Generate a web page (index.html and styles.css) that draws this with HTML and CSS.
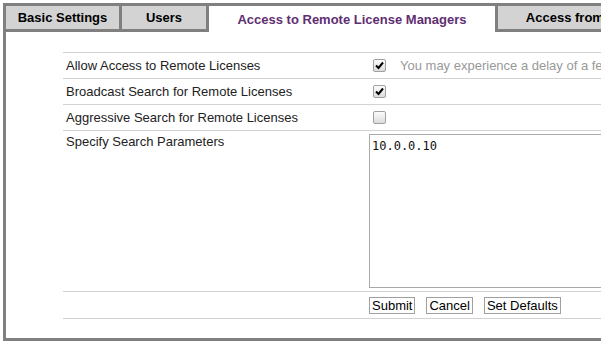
FILE: index.html
```html
<!DOCTYPE html>
<html lang="en">
<head>
    <meta charset="UTF-8">
    <meta name="viewport" content="width=device-width, initial-scale=1.0">
    <title>License Manager Configuration</title>
    <link rel="stylesheet" href="styles.css">
</head>
<body>
    <div class="panel">
        <ul class="tabs">
            <li class="tab tab-basic">Basic Settings</li>
            <li class="tab tab-users">Users</li>
            <li class="tab active">Access to Remote License Managers</li>
            <li class="tab tab-clients">Access from Remote Clients</li>
        </ul>
        <form class="settings" onsubmit="return false">
            <div class="row">
                <div class="label">Allow Access to Remote Licenses</div>
                <div class="field">
                    <input type="checkbox" class="check" checked>
                    <span class="hint">You may experience a delay of a few minutes before your changes take effect.</span>
                </div>
            </div>
            <div class="row">
                <div class="label">Broadcast Search for Remote Licenses</div>
                <div class="field"><input type="checkbox" class="check" checked></div>
            </div>
            <div class="row">
                <div class="label">Aggressive Search for Remote Licenses</div>
                <div class="field"><input type="checkbox" class="check"></div>
            </div>
            <div class="row row-params">
                <div class="label">Specify Search Parameters</div>
                <div class="field"><textarea class="params">10.0.0.10</textarea></div>
            </div>
            <div class="row row-actions">
                <div class="label"></div>
                <div class="field buttons">
                    <button type="submit">Submit</button>
                    <button type="button">Cancel</button>
                    <button type="button">Set Defaults</button>
                </div>
            </div>
        </form>
    </div>
</body>
</html>
```

FILE: styles.css
```css
body {
    margin: 3px 0 0 3px;
    overflow: hidden;
    font-family: Arial, "Liberation Sans", sans-serif;
    font-size: 13px;
    color: #222;
    background: white;
}
.panel {
    width: 900px;
    border: 3px solid #808080;
}
.tabs {
    display: flex;
    margin: 0;
    padding: 0;
    list-style: none;
}
.tab {
    flex-shrink: 0;
    height: 23px;
    line-height: 23px;
    text-align: center;
    font-weight: bold;
    color: #000;
    background-color: #d3d3d3;
    border-bottom: 3px solid #808080;
    white-space: nowrap;
}
.tab-basic {
    width: 113px;
    border-right: 3px solid #808080;
}
.tab-users {
    width: 84px;
    border-right: 3px solid #808080;
}
.tab.active {
    width: 286px;
    height: 26px;
    line-height: 27px;
    background-color: white;
    color: #5f2e72;
    border-bottom: none;
}
.tab-clients {
    width: 232px;
    border-left: 3px solid #808080;
}
.settings {
    margin: 20px 0 19px 57px;
    width: 800px;
    border-bottom: 1px solid #d3d3d3;
}
.row {
    display: flex;
    align-items: center;
    height: 25px;
    border-top: 1px solid #d3d3d3;
}
.label {
    flex-shrink: 0;
    width: 303px;
    padding-left: 3px;
    color: #222;
}
.field {
    flex: 1;
    display: flex;
    align-items: center;
    min-width: 0;
}
.check {
    flex-shrink: 0;
    appearance: none;
    width: 13px;
    height: 13px;
    margin: 0 0 0 4px;
    border: 1px solid #a0a0a0;
    border-radius: 2px;
    background: linear-gradient(#fcfcfc, #dcdcdc);
}
.check:checked {
    background: url("data:image/svg+xml;utf8,<svg xmlns='http://www.w3.org/2000/svg' width='11' height='11'><path d='M2 5.5 L4.5 8 L9 2.5' fill='none' stroke='black' stroke-width='2'/></svg>") center no-repeat,
        linear-gradient(#fcfcfc, #dcdcdc);
}
.hint {
    margin-left: 14px;
    color: #999;
    white-space: nowrap;
}
.row-params {
    height: 160px;
    align-items: flex-start;
}
.row-params .label {
    padding-top: 3px;
}
.params {
    width: 420px;
    height: 154px;
    margin: 3px 0 0 0;
    padding: 4px 2px;
    box-sizing: border-box;
    border: 1px solid #a9a9a9;
    font-family: "DejaVu Sans Mono", monospace;
    font-size: 12px;
    color: #111;
    resize: none;
}
.row-actions {
    height: 26px;
}
.buttons {
    gap: 11px;
}
.buttons button {
    height: 17px;
    padding: 0 2px;
    font-family: Arial, "Liberation Sans", sans-serif;
    font-size: 13px;
    color: #000;
    background: white;
    border: 1px solid #a0a0a0;
    border-radius: 0;
}
```
